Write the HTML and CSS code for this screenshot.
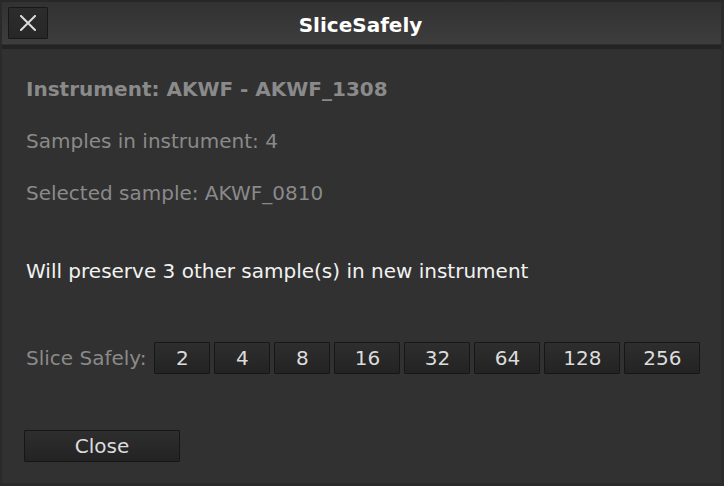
FILE: index.html
```html
<!DOCTYPE html>
<html>
<head>
<meta charset="utf-8">
<link rel="stylesheet" href="styles.css">
</head>
<body>
<div class="window">
  <div class="titlebar">
    <div class="tb-left">
      <button class="xbtn" aria-label="Close">
        <svg width="16" height="16" viewBox="0 0 16 16"><path d="M1 1 L15 15 M15 1 L1 15" stroke="#dcdcdc" stroke-width="2" stroke-linecap="square" fill="none"/></svg>
      </button>
    </div>
    <div class="title">SliceSafely</div>
    <div class="tb-right"></div>
  </div>
  <div class="sep"></div>
  <div class="content">
    <div class="line bold dim">Instrument: AKWF - AKWF_1308</div>
    <div class="line dim gap1">Samples in instrument: 4</div>
    <div class="line dim gap1">Selected sample: AKWF_0810</div>
    <div class="line bright gap2">Will preserve 3 other sample(s) in new instrument</div>
    <div class="slice-row">
      <span class="slice-label">Slice Safely:</span>
      <button class="btn w1">2</button>
      <button class="btn w1">4</button>
      <button class="btn w1">8</button>
      <button class="btn w2">16</button>
      <button class="btn w2">32</button>
      <button class="btn w2">64</button>
      <button class="btn w3">128</button>
      <button class="btn w3">256</button>
    </div>
    <div class="footer">
      <button class="btn close">Close</button>
    </div>
  </div>
</div>
</body>
</html>
```

FILE: styles.css
```css
* { box-sizing: border-box; }
html, body {
  margin: 0;
  padding: 0;
  width: 724px;
  height: 486px;
  overflow: hidden;
  background: #262626;
  font-family: "DejaVu Sans", "Liberation Sans", sans-serif;
}
.window {
  width: 724px;
  height: 486px;
  display: flex;
  flex-direction: column;
  border-top: 2px solid #282828;
  border-left: 2px solid #2a2a2a;
  border-right: 3px solid #2b2b2b;
  border-bottom: 3px solid #2b2b2b;
  background: #313131;
}
.titlebar {
  height: 43px;
  display: grid;
  grid-template-columns: 1fr auto 1fr;
  align-items: center;
  background: linear-gradient(#323232, #3d3d3d);
  border-bottom: 1px solid #2f2f2f;
}
.tb-left {
  padding-left: 6px;
  display: flex;
  align-items: center;
}
.xbtn {
  width: 40px;
  height: 32px;
  margin: 0;
  padding: 0;
  display: flex;
  align-items: center;
  justify-content: center;
  background: linear-gradient(#2c2c2c, #272727);
  border: 1px solid #181818;
  border-radius: 1px;
}
.title {
  color: #ffffff;
  font-weight: bold;
  font-size: 20px;
  line-height: 24px;
  padding-top: 3px;
  margin-left: -2px;
}
.sep {
  height: 4px;
  background: #232323;
}
.content {
  flex: 1;
  padding: 28px 0 0 24px;
  display: flex;
  flex-direction: column;
  align-items: flex-start;
}
.line {
  font-size: 20px;
  line-height: 24px;
  white-space: nowrap;
}
.bold { font-weight: bold; }
.dim { color: #8a8a8a; }
.bright { color: #f2f2f2; }
.gap1 { margin-top: 28px; }
.gap2 { margin-top: 54px; }
.slice-row {
  margin-top: 59px;
  display: flex;
  align-items: center;
  gap: 4px;
}
.slice-label {
  font-size: 20px;
  line-height: 24px;
  color: #8a8a8a;
  margin-right: 4px;
}
.btn {
  height: 32px;
  margin: 0;
  padding: 0;
  font-family: "DejaVu Sans", "Liberation Sans", sans-serif;
  font-size: 20px;
  line-height: 24px;
  color: #dcdcdc;
  background: linear-gradient(#2e2e2e, #282828 55%, #232323);
  border: 1px solid #161616;
  border-radius: 1px;
  text-align: center;
}
.w1 { width: 56px; }
.w2 { width: 66px; }
.w3 { width: 76px; }
.footer {
  margin-top: 56px;
  margin-left: -2px;
}
.close { width: 156px; }
```
